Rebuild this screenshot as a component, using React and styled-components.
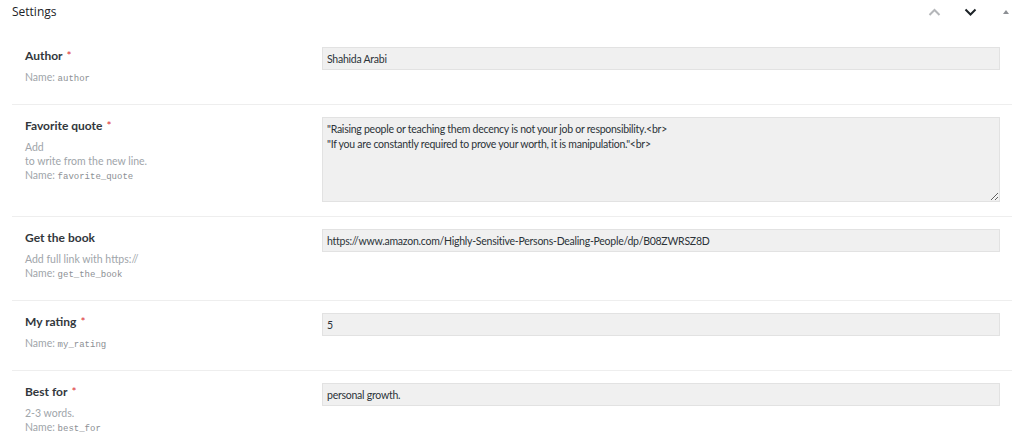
import React from 'react'
import styled, { createGlobalStyle } from 'styled-components'

const GlobalStyle = createGlobalStyle`
  html, body {
    margin: 0;
    padding: 0;
    background: #fff;
  }
  body {
    font-family: Lato, "Open Sans", sans-serif;
    color: #1d2327;
  }
`

const fields = [
  { label: 'Author', required: true, name: 'author', value: 'Shahida Arabi' },
  {
    label: 'Favorite quote',
    required: true,
    name: 'favorite_quote',
    help: ['Add', 'to write from the new line.'],
    multiline: true,
    value:
      '"Raising people or teaching them decency is not your job or responsibility.<br>\n"If you are constantly required to prove your worth, it is manipulation."<br>',
  },
  {
    label: 'Get the book',
    name: 'get_the_book',
    help: ['Add full link with https://'],
    value: 'https://www.amazon.com/Highly-Sensitive-Persons-Dealing-People/dp/B08ZWRSZ8D',
  },
  { label: 'My rating', required: true, name: 'my_rating', value: '5' },
  { label: 'Best for', required: true, name: 'best_for', help: ['2-3 words.'], value: 'personal growth.' },
]

function Chevron({ up, color }) {
  return (
    <svg width="13" height="8" viewBox="0 0 13 8">
      <path
        d={up ? 'M1.5 7 L6.5 2 L11.5 7' : 'M1.5 1.5 L6.5 6.5 L11.5 1.5'}
        fill="none"
        stroke={color}
        strokeWidth="2"
      />
    </svg>
  )
}

function App() {
  return (
    <Box>
      <GlobalStyle />
      <Header>
        <Title>Settings</Title>
        <Tools>
          <ToolButton>
            <Chevron up color="#b4b6b9" />
          </ToolButton>
          <ToolButton>
            <Chevron color="#1d2327" />
          </ToolButton>
          <ToolButton>
            <svg width="6" height="4" viewBox="0 0 6 4">
              <path d="M0 4 L3 0 L6 4 Z" fill="#8c8f94" />
            </svg>
          </ToolButton>
        </Tools>
      </Header>
      <Fields>
        {fields.map((f) => (
          <Row key={f.name}>
            <LabelCol>
              <Label>
                {f.label}
                {f.required && <Star>*</Star>}
              </Label>
              <Help>
                {(f.help || []).map((line) => (
                  <div key={line}>{line}</div>
                ))}
                <div>
                  Name: <code>{f.name}</code>
                </div>
              </Help>
            </LabelCol>
            <InputCol>
              {f.multiline ? (
                <TextArea defaultValue={f.value} />
              ) : (
                <Input defaultValue={f.value} />
              )}
            </InputCol>
          </Row>
        ))}
      </Fields>
    </Box>
  )
}

export default App

const Box = styled.div`
  width: 1024px;
  background: #fff;
`

const Header = styled.div`
  height: 35px;
  display: flex;
  justify-content: space-between;
  align-items: flex-start;
  padding: 3px 0 0 12px;
  box-sizing: border-box;
`

const Title = styled.h2`
  margin: 0;
  font-family: "Open Sans", sans-serif;
  font-size: 12px;
  line-height: 18px;
  font-weight: 400;
  color: #1d2327;
`

const Tools = styled.div`
  display: flex;
  align-items: center;
  height: 18px;
`

const ToolButton = styled.span`
  display: flex;
  align-items: center;
  justify-content: center;
  width: 36px;
  height: 18px;
`

const Fields = styled.div`
  padding: 0 12px;
`

const Row = styled.div`
  display: grid;
  grid-template-columns: 310px 1fr;
  padding: 12px 12px 14px 0;
  border-top: 1px solid #eeeeee;

  &:first-child {
    border-top: none;
  }
`

const LabelCol = styled.div`
  padding: 0 13px 6px;
`

const Label = styled.div`
  font-size: 12px;
  line-height: 18px;
  font-weight: 700;
  color: #32373c;
`

const Star = styled.span`
  color: #dc3232;
  margin-left: 4px;
  font-weight: 400;
`

const Help = styled.div`
  margin-top: 5px;
  font-size: 10.5px;
  line-height: 14px;
  color: #a0a5aa;

  code {
    font-family: "Liberation Mono", monospace;
    font-size: 9px;
    line-height: 1;
    color: #8c8f94;
  }
`

const InputCol = styled.div`
  display: flex;
`

const fieldStyle = `
  width: 100%;
  box-sizing: border-box;
  background: #f0f0f0;
  border: 1px solid #e2e2e2;
  border-radius: 0;
  color: #2c3338;
  font-family: Lato, "Open Sans", sans-serif;
  font-size: 10.5px;
  letter-spacing: -0.25px;
  padding: 0 4px;
  outline: none;
`

const Input = styled.input`
  ${fieldStyle}
  height: 23px;
`

const TextArea = styled.textarea`
  ${fieldStyle}
  height: 85px;
  padding: 4px 4px;
  line-height: 15px;
  resize: vertical;
`
